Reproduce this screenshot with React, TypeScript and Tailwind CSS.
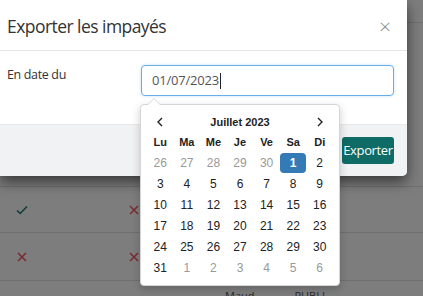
import React from "react";

const weeks: [number, boolean][][] = [
  [[26, true], [27, true], [28, true], [29, true], [30, true], [1, false], [2, false]],
  [[3, false], [4, false], [5, false], [6, false], [7, false], [8, false], [9, false]],
  [[10, false], [11, false], [12, false], [13, false], [14, false], [15, false], [16, false]],
  [[17, false], [18, false], [19, false], [20, false], [21, false], [22, false], [23, false]],
  [[24, false], [25, false], [26, false], [27, false], [28, false], [29, false], [30, false]],
  [[31, false], [1, true], [2, true], [3, true], [4, true], [5, true], [6, true]],
];

const days = ["Lu", "Ma", "Me", "Je", "Ve", "Sa", "Di"];

function Check() {
  return (
    <svg width="12" height="10" viewBox="0 0 12 10">
      <path d="M1 5.5 L4.2 8.5 L11 1.5" stroke="#0c3d3a" strokeWidth="1.6" fill="none" />
    </svg>
  );
}
function Cross() {
  return (
    <svg width="10" height="10" viewBox="0 0 10 10">
      <path d="M1 1 L9 9 M9 1 L1 9" stroke="#7a2a2e" strokeWidth="1.5" fill="none" />
    </svg>
  );
}

export default function App() {
  return (
    <div
      className="relative w-[423px] h-[296px] overflow-hidden bg-[#7d7d7d]"
      style={{ fontFamily: '"Open Sans", "Noto Sans", sans-serif' }}
    >
      {/* background table */}
      <div className="flex flex-col pt-[22px]">
        <div className="h-[164px] border-t border-[#6f6f6f]" />
        <div className="h-[46px] border-t border-[#6f6f6f] flex items-center">
          <div className="w-[44px] flex justify-center"><Check /></div>
          <div className="w-[80px]" />
          <div className="w-[20px] flex justify-center"><Cross /></div>
        </div>
        <div className="h-[48px] border-t border-[#6f6f6f] flex items-center">
          <div className="w-[44px] flex justify-center"><Cross /></div>
          <div className="w-[80px]" />
          <div className="w-[20px] flex justify-center"><Cross /></div>
        </div>
        <div className="border-t border-[#6f6f6f] pt-[9px] pl-[225px] text-[11px] leading-none text-[#2a2a2a] flex gap-[40px]">
          <span>Maud</span>
          <span>PUBLI</span>
        </div>
      </div>

      {/* modal */}
      <div className="absolute left-0 top-0 w-[407px] h-[176px] bg-white rounded-br-[5px] shadow-[0_6px_14px_rgba(0,0,0,0.55)] flex flex-col">
        <div className="h-[51px] border-b border-[#e5e5e5] flex items-center justify-between pl-[7px] pr-[16px] pt-[2px]">
          <span className="text-[17.5px] text-[#333] tracking-[-0.55px]">Exporter les impayés</span>
          <span className="text-[21px] leading-none text-[#888] font-light">×</span>
        </div>
        <div className="h-[73px] flex pl-[7px] pr-[13px] pt-[14px]">
          <span className="w-[134px] text-[12.5px] text-[#333] tracking-[-0.35px] pt-[1px]">En date du</span>
          <div className="flex-1 h-[31px] border border-[#66afe9] rounded-[4px] flex items-center pl-[10px] text-[13px] text-[#555] tracking-[-0.2px] shadow-[0_0_3px_rgba(102,175,233,0.4)]">
            <span>01/07/2023</span>
            <span className="w-[1px] h-[16px] bg-[#222] ml-[1px]" />
          </div>
        </div>
        <div className="flex-1 bg-[#f1f2f4] border-t border-[#e8e8e8] rounded-br-[5px] flex items-center justify-end pr-[13px]">
          <div className="h-[27px] w-[52px] bg-[#0e6b66] rounded-[3px] text-white text-[13px] flex items-center justify-center tracking-[-0.35px]">
            Exporter
          </div>
        </div>
      </div>

      {/* datepicker */}
      <div
        className="absolute left-[140px] top-[104px] w-[200px] h-[182px] bg-white border border-[#d5d5d5] rounded-[4px] shadow-[0_3px_8px_rgba(0,0,0,0.2)] px-[6px] pt-[7px]"
        style={{ fontFamily: '"Liberation Sans", Arial, sans-serif' }}
      >
        <div className="absolute left-[6px] top-[-7px] w-0 h-0 border-x-[7px] border-x-transparent border-b-[7px] border-b-[#d5d5d5]" />
        <div className="absolute left-[7px] top-[-6px] w-0 h-0 border-x-[6px] border-x-transparent border-b-[6px] border-b-white" />
        <div className="grid grid-cols-7 text-[12px] text-[#222]">
          <div className="h-[20px] flex items-center justify-center">
            <svg width="8" height="10" viewBox="0 0 8 10"><path d="M6 1 L2 5 L6 9" stroke="#222" strokeWidth="1.4" fill="none" /></svg>
          </div>
          <div className="col-span-5 h-[20px] flex items-center justify-center font-bold text-[11px]">Juillet 2023</div>
          <div className="h-[20px] flex items-center justify-center">
            <svg width="8" height="10" viewBox="0 0 8 10"><path d="M2 1 L6 5 L2 9" stroke="#222" strokeWidth="1.4" fill="none" /></svg>
          </div>
          {days.map((d) => (
            <div key={d} className="h-[20px] flex items-center justify-center font-bold text-[11px]">{d}</div>
          ))}
          {weeks.flat().map(([n, muted], i) => {
            const sel = i === 5;
            return (
              <div key={i} className="h-[21px] flex items-center justify-center">
                <div
                  className={
                    sel
                      ? "w-[26px] h-[20px] rounded-[4px] bg-[#337ab7] text-white font-bold flex items-center justify-center"
                      : muted
                      ? "text-[#999]"
                      : "text-[#222]"
                  }
                >
                  {n}
                </div>
              </div>
            );
          })}
        </div>
      </div>
    </div>
  );
}
